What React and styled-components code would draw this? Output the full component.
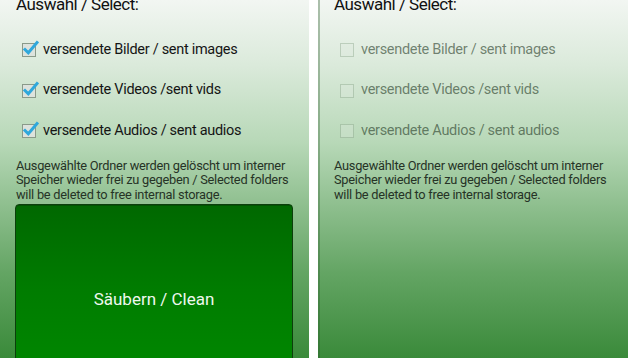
import React from "react";
import styled, { createGlobalStyle } from "styled-components";

const Global = createGlobalStyle`
  html, body { margin: 0; padding: 0; background: #ffffff; }
  body { width: 628px; height: 358px; overflow: hidden; font-family: Roboto, "Liberation Sans", sans-serif; }
`;

const Screen = styled.div`
  display: flex;
  gap: 9px;
  width: 628px;
  height: 358px;
  background: #ffffff;
`;

const Panel = styled.div`
  flex: 0 0 ${(p) => p.$w}px;
  height: 358px;
  overflow: hidden;
  display: flex;
  flex-direction: column;
  padding: 0 12px 0 16px;
  box-sizing: border-box;
  background: linear-gradient(
    180deg,
    #f2f6f2 0%,
    #dbeadb 18%,
    #b7d8b7 40%,
    #8dbe8d 58%,
    #64a564 76%,
    #3a8a3a 100%
  );
  box-shadow: ${(p) => (p.$edge ? "inset 2px 0 0 rgba(40,90,40,0.35)" : "none")};
`;

const Heading = styled.div`
  font-size: 17px;
  line-height: 20px;
  letter-spacing: -0.5px;
  margin-top: -6px;
  color: #111;
`;

const Options = styled.div`
  display: flex;
  flex-direction: column;
  padding-top: 15px;
`;

const Row = styled.label`
  display: flex;
  align-items: center;
  height: 40.5px;
  padding-left: 5px;
  gap: 4px;
  font-size: 14.5px;
  letter-spacing: -0.3px;
  color: ${(p) => (p.$disabled ? "rgba(35,55,35,0.6)" : "#151515")};
`;

const Note = styled.p`
  margin: 8px 0 0;
  font-size: 12.8px;
  line-height: 14.5px;
  letter-spacing: -0.25px;
  color: #263326;
`;

const CleanButton = styled.button`
  margin: 2px 0 0 -1px;
  width: 278px;
  height: 190px;
  flex: 0 0 auto;
  border: 1px solid #0c3f0c;
  border-radius: 4px;
  background: linear-gradient(180deg, #006800 0%, #007c00 45%, #008a00 100%);
  color: #eef8ee;
  font-family: Roboto, "Liberation Sans", sans-serif;
  font-size: 17px;
  padding: 0;
  box-shadow: inset 0 1px 0 rgba(0,0,0,0.2);
`;

const Box = ({ checked, disabled }) => (
  <svg width="18" height="18" viewBox="0 0 18 18" style={{ flex: "0 0 auto" }}>
    <rect
      x="1.5"
      y="3.5"
      width="13"
      height="13"
      fill={disabled ? "rgba(220,232,220,0.35)" : "#dde3dd"}
      stroke={disabled ? "rgba(120,150,120,0.35)" : "#8a9a8a"}
      strokeWidth="1"
    />
    {checked && (
      <path
        d="M4 9.5 L7.3 12.8 L16 2.5"
        fill="none"
        stroke="#2fa8dc"
        strokeWidth="3"
        strokeLinecap="square"
      />
    )}
  </svg>
);

const labels = [
  "versendete Bilder / sent images",
  "versendete Videos /sent vids",
  "versendete Audios / sent audios",
];

const Screenshot = ({ active, width, edge }) => (
  <Panel $w={width} $edge={edge}>
    <Heading>Auswahl / Select:</Heading>
    <Options>
      {labels.map((l) => (
        <Row key={l} $disabled={!active}>
          <Box checked={active} disabled={!active} />
          {l}
        </Row>
      ))}
    </Options>
    <Note>
      Ausgewählte Ordner werden gelöscht um interner Speicher wieder frei zu
      gegeben / Selected folders will be deleted to free internal storage.
    </Note>
    {active && <CleanButton>Säubern / Clean</CleanButton>}
  </Panel>
);

export default function App() {
  return (
    <>
      <Global />
      <Screen>
        <Screenshot active width={309} />
        <Screenshot active={false} width={310} edge />
      </Screen>
    </>
  );
}
